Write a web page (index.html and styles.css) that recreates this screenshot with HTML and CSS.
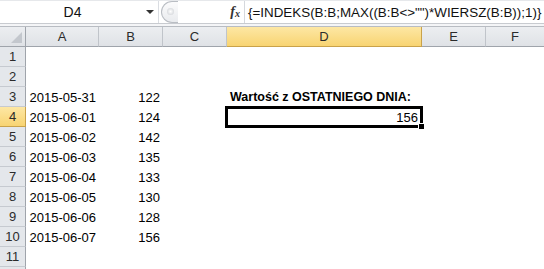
FILE: index.html
```html
<!DOCTYPE html>
<html>
<head>
<meta charset="utf-8">
<link rel="stylesheet" href="styles.css">
</head>
<body>
<div class="app">
  <div class="fbar">
    <div class="namebox"><span class="name">D4</span><span class="arrow"></span></div>
    <div class="tools"><span class="grip"></span><span class="fx">f<sub>x</sub></span></div>
    <div class="formula">{=INDEKS(B:B;MAX((B:B&lt;&gt;"")*WIERSZ(B:B));1)}</div>
  </div>
  <div class="sep"></div>
  <div class="grid">
    <div class="ch corner"><span class="tri"></span></div>
    <div class="ch">A</div>
    <div class="ch">B</div>
    <div class="ch">C</div>
    <div class="ch sel">D</div>
    <div class="ch">E</div>
    <div class="ch last">F</div>

    <div class="rh">1</div><div></div><div></div><div></div><div></div><div></div><div></div>
    <div class="rh">2</div><div></div><div></div><div></div><div></div><div></div><div></div>
    <div class="rh">3</div><div class="num">2015-05-31</div><div class="num">122</div><div></div><div class="label">Wartość z OSTATNIEGO DNIA:</div><div></div><div></div>
    <div class="rh rsel">4</div><div class="num">2015-06-01</div><div class="num">124</div><div></div><div class="num active">156<span class="handle"></span></div><div></div><div></div>
    <div class="rh">5</div><div class="num">2015-06-02</div><div class="num">142</div><div></div><div></div><div></div><div></div>
    <div class="rh">6</div><div class="num">2015-06-03</div><div class="num">135</div><div></div><div></div><div></div><div></div>
    <div class="rh">7</div><div class="num">2015-06-04</div><div class="num">133</div><div></div><div></div><div></div><div></div>
    <div class="rh">8</div><div class="num">2015-06-05</div><div class="num">130</div><div></div><div></div><div></div><div></div>
    <div class="rh">9</div><div class="num">2015-06-06</div><div class="num">128</div><div></div><div></div><div></div><div></div>
    <div class="rh">10</div><div class="num">2015-06-07</div><div class="num">156</div><div></div><div></div><div></div><div></div>
    <div class="rh">11</div><div></div><div></div><div></div><div></div><div></div><div></div>
    <div class="rh"></div><div></div><div></div><div></div><div></div><div></div><div></div>
  </div>
</div>
</body>
</html>
```
FILE: styles.css
```css
html, body {
  margin: 0;
  padding: 0;
  background: #ffffff;
  overflow: hidden;
}
.app {
  width: 544px;
  height: 269px;
  overflow: hidden;
  font-family: "Liberation Sans", Arial, sans-serif;
  color: #000;
}
.fbar {
  display: flex;
  height: 23px;
  background: #ffffff;
  border-top: 1px solid #e6e8eb;
  box-sizing: border-box;
}
.namebox {
  width: 159px;
  display: flex;
  align-items: center;
  position: relative;
  border-right: 1px solid #dadde2;
  box-sizing: border-box;
}
.name {
  width: 145px;
  text-align: center;
  font-size: 14px;
  color: #111;
}
.arrow {
  width: 0;
  height: 0;
  border-left: 4px solid transparent;
  border-right: 4px solid transparent;
  border-top: 4px solid #333;
  margin-left: 1px;
}
.tools {
  width: 86px;
  display: flex;
  align-items: center;
  justify-content: space-between;
  padding-left: 2px;
  padding-right: 4px;
  box-sizing: border-box;
  border-right: 1px solid #d5d8dd;
}
.grip {
  width: 16px;
  height: 20px;
  border: 1px solid #b9bdc3;
  border-right: none;
  border-radius: 11px 0 0 11px;
  background: linear-gradient(#fbfbfc, #e9ebee);
  position: relative;
}
.grip::after {
  content: "";
  position: absolute;
  left: 5px;
  top: 6px;
  width: 7px;
  height: 7px;
  border-radius: 50%;
  background: radial-gradient(#ffffff, #c9ccd1);
}
.fx {
  font-family: "Liberation Serif", serif;
  font-style: italic;
  font-weight: bold;
  font-size: 14px;
  color: #333;
}
.fx sub {
  font-size: 10px;
  vertical-align: -1px;
}
.formula {
  flex: 1;
  display: flex;
  align-items: center;
  padding-left: 3px;
  font-size: 13.4px;
  color: #111;
  white-space: nowrap;
}
.sep {
  height: 4px;
  background: #f4f5f7;
  border-top: 1px solid #c8cbd0;
  border-bottom: 1px solid #b8bcc2;
  box-sizing: border-box;
}
.grid {
  display: grid;
  grid-template-columns: 26px 73px 64px 64px 195px 64px 58px;
  grid-template-rows: 20px repeat(12, 20px);
}
.ch {
  background: linear-gradient(#eceef1, #dfe2e6);
  border-right: 1px solid #c0c4ca;
  border-bottom: 1px solid #9fa4ab;
  box-sizing: border-box;
  display: flex;
  align-items: center;
  justify-content: center;
  font-size: 13px;
  color: #2b2b2b;
}
.ch.last {
  border-right: none;
}
.ch.sel {
  background: linear-gradient(#fde7a4, #f8d472);
  border-right-color: #c9a24a;
  border-bottom-color: #c9a24a;
}
.corner {
  position: relative;
  border-right-color: #9fa4ab;
}
.tri {
  position: absolute;
  right: 3px;
  bottom: 3px;
  width: 0;
  height: 0;
  border-left: 11px solid transparent;
  border-bottom: 11px solid #c3c7cd;
}
.rh {
  background: #e4e7eb;
  border-right: 1px solid #9fa4ab;
  border-bottom: 1px solid #c6cad0;
  box-sizing: border-box;
  display: flex;
  align-items: center;
  justify-content: center;
  font-size: 13px;
  color: #2b2b2b;
}
.rh.rsel {
  background: linear-gradient(#fde7a4, #f8d472);
  border-right-color: #c9a24a;
  border-bottom-color: #c9a24a;
}
.num {
  display: flex;
  align-items: center;
  justify-content: flex-end;
  padding-right: 3px;
  font-size: 13px;
  white-space: nowrap;
}
.label {
  display: flex;
  align-items: center;
  padding-left: 3px;
  font-size: 12.5px;
  font-weight: bold;
  white-space: nowrap;
  overflow: visible;
}
.active {
  position: relative;
  padding-right: 4px;
}
.active::before {
  content: "";
  position: absolute;
  left: -2px;
  top: -1px;
  right: -1px;
  bottom: -1px;
  border: 3px solid #000;
  box-sizing: border-box;
}
.handle {
  position: absolute;
  right: -3px;
  bottom: -3px;
  width: 5px;
  height: 5px;
  background: #000;
  border: 1px solid #fff;
}
```
